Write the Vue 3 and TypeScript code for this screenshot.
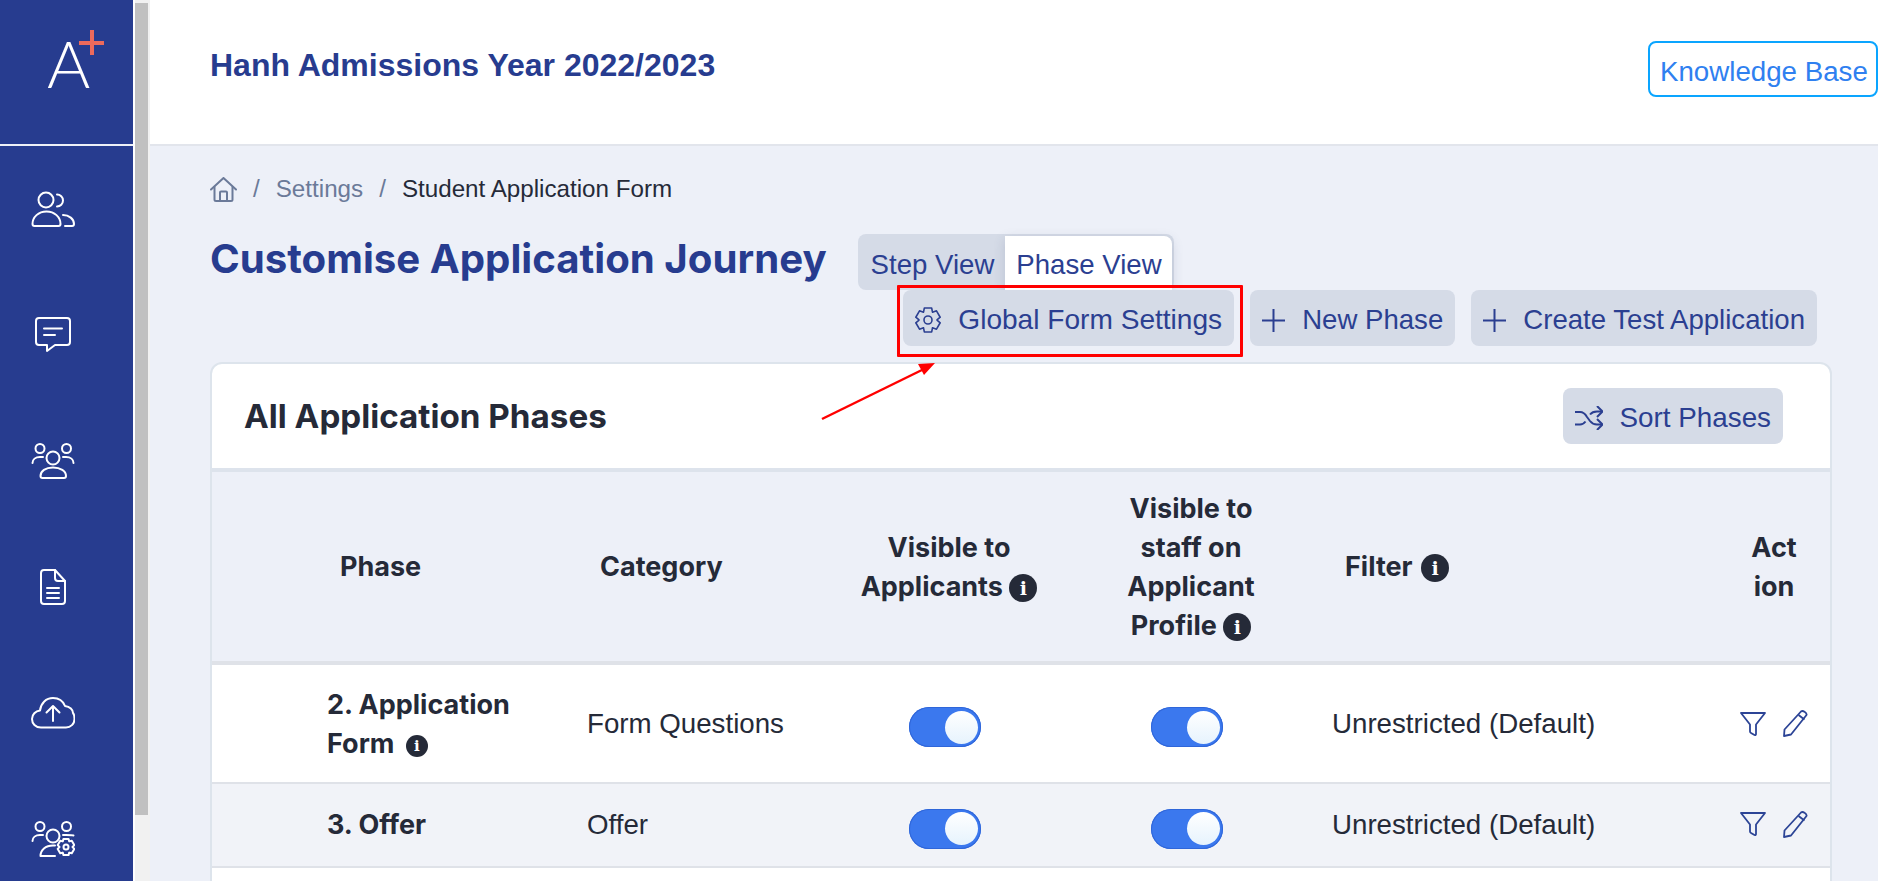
<script setup lang="ts">
interface Phase {
  name: string
  hasInfo: boolean
  category: string
  filter: string
}

const phases: Phase[] = [
  { name: '2. Application Form', hasInfo: true, category: 'Form Questions', filter: 'Unrestricted (Default)' },
  { name: '3. Offer', hasInfo: false, category: 'Offer', filter: 'Unrestricted (Default)' },
]

// six lobed cog, used by the settings button and the last nav icon
const cogPath = (cx: number, cy: number, outer: number, inner: number) => {
  const pts: string[] = []
  for (let i = 0; i < 6; i++) {
    const a = (Math.PI / 3) * i - Math.PI / 2
    const corners: [number, number][] = [
      [a - 0.52, inner],
      [a - 0.3, outer],
      [a + 0.3, outer],
      [a + 0.52, inner],
    ]
    corners.forEach(([ang, r]) => {
      pts.push(`${(cx + Math.cos(ang) * r).toFixed(2)} ${(cy + Math.sin(ang) * r).toFixed(2)}`)
    })
  }
  return `M${pts.join('L')}Z`
}
</script>

<template>
  <div class="app">
    <aside class="sidebar">
      <div class="logo">
        <span class="logo-a">A</span>
        <span class="logo-plus"></span>
      </div>
      <nav class="nav">
        <a class="nav-item">
          <svg width="44" height="36" viewBox="0 0 44 36" class="nav-icon">
            <circle cx="15" cy="9" r="7.5" />
            <path d="M26 3.5a6 6 0 1 1 0 12" />
            <path d="M1.500 33c0-7 6-12.500 14-12.500s14 5.500 14 12.500q0 2-2 2H3.500q-2 0-2-2z" />
            <path d="M32 24c6 0 11 4 11 9q0 2-2 2h-7" />
          </svg>
        </a>
        <a class="nav-item">
          <svg width="36" height="36" viewBox="0 0 36 36" class="nav-icon">
            <path d="M4 1h28a3 3 0 0 1 3 3v21a3 3 0 0 1-3 3H20l-8 6v-6H4a3 3 0 0 1-3-3V4a3 3 0 0 1 3-3z" />
            <path d="M9 11.500h18M9 18h11" />
          </svg>
        </a>
        <a class="nav-item">
          <svg width="44" height="36" viewBox="0 0 44 36" class="nav-icon">
            <circle cx="22" cy="15" r="6.500" />
            <circle cx="9" cy="5.500" r="4.500" />
            <circle cx="35.500" cy="5.500" r="4.500" />
            <path d="M1.500 20c0-3.500 3-6 7.500-6h3M42.500 20c0-3.500-3-6-7.500-6h-3" />
            <path d="M9.500 33c0-5 5-8.500 12.500-8.500S35 28 35 33q0 2-2 2H11.500q-2 0-2-2z" />
          </svg>
        </a>
        <a class="nav-item">
          <svg width="26" height="36" viewBox="0 0 26 36" class="nav-icon">
            <path d="M4 1h11l10 11v20a3 3 0 0 1-3 3H4a3 3 0 0 1-3-3V4a3 3 0 0 1 3-3z" />
            <path d="M15 1v8a3 3 0 0 0 3 3h7" />
            <path d="M7 19h12M7 24h12M7 29h12" />
          </svg>
        </a>
        <a class="nav-item">
          <svg width="44" height="32" viewBox="0 0 44 32" class="nav-icon">
            <path d="M10 30.500C4.500 30.500 1 26.500 1 22c0-4.500 3.500-8 8-8.500C10 6 15 1 22 1c6 0 10 3 12 8 5 .5 8 4 8 7 1.500 1.500 1.500 3 1.500 6 0 5-4 8.500-8.500 8.500z" />
            <path d="M22 24V9M15.500 15.500 22 9l6.500 6.500" />
          </svg>
        </a>
        <a class="nav-item">
          <svg width="44" height="36" viewBox="0 0 44 36" class="nav-icon">
            <circle cx="22" cy="15" r="6.500" />
            <circle cx="9" cy="5.500" r="4.500" />
            <circle cx="35.500" cy="5.500" r="4.500" />
            <path d="M1.500 20c0-3.500 3-6 7.500-6h3M42.500 14.500c-1-.4-3-.5-7.500-.5h-3" />
            <path d="M9.500 35c0-6 5-10.500 12.500-10.500h2M9.500 35H24" />
            <path :d="cogPath(35, 26, 8.500, 6.500)" />
            <circle cx="35" cy="26" r="2.500" />
          </svg>
        </a>
      </nav>
    </aside>
    <div class="scrollbar"><div class="scrollbar-thumb"></div></div>

    <main class="main">
      <header class="topbar">
        <h2 class="year-title">Hanh Admissions Year 2022/2023</h2>
        <button class="kb-button">Knowledge Base</button>
      </header>

      <section class="content">
        <div class="breadcrumb">
          <svg width="27" height="25" viewBox="0 0 27 25" class="home-icon">
            <path d="M1 12.500 13.500 1 26 12.500" />
            <path d="M4.500 10v12.500a1.500 1.500 0 0 0 1.500 1.500h15a1.500 1.500 0 0 0 1.500-1.500V10" />
            <path d="M10 24v-8.500a1 1 0 0 1 1-1h5a1 1 0 0 1 1 1V24" />
          </svg>
          <span class="crumb-sep">/</span>
          <span class="crumb">Settings</span>
          <span class="crumb-sep">/</span>
          <span class="crumb-current">Student Application Form</span>
        </div>

        <div class="title-row">
          <h1 class="page-title">Customise Application Journey</h1>
          <div class="tabs">
            <button class="tab">Step View</button>
            <button class="tab tab-active">Phase View</button>
          </div>
        </div>

        <div class="toolbar">
          <button class="btn btn-global">
            <svg width="26" height="28" viewBox="0 0 26 28" class="btn-icon btn-cog">
              <path :d="cogPath(13, 14, 12.500, 9)" />
              <circle cx="13" cy="14" r="4" />
            </svg>
            Global Form Settings
            <span class="callout"></span>
          </button>
          <button class="btn">
            <svg width="23" height="23" viewBox="0 0 23 23" class="btn-icon"><path d="M11.500 0v23M0 11.500h23" /></svg>
            New Phase
          </button>
          <button class="btn">
            <svg width="23" height="23" viewBox="0 0 23 23" class="btn-icon"><path d="M11.500 0v23M0 11.500h23" /></svg>
            Create Test Application
          </button>
        </div>

        <div class="card">
          <div class="card-head">
            <h3 class="card-title">All Application Phases</h3>
            <button class="btn btn-sort">
              <svg width="28" height="24" viewBox="0 0 28 24" class="btn-icon">
                <path d="M0 6h5c3 0 5 1.500 7 5l3 4c2 2.500 4 3.500 7 3.500h5" />
                <path d="M0 18.500h5c2.500 0 4-1 5.500-3M15 8.500C17 6 19 5.500 22 5.500h5" />
                <path d="M22 0l5.500 5.500L22 11M22 13l5.500 5.500L22 24" />
              </svg>
              Sort Phases
            </button>
          </div>

          <div class="grid grid-head">
            <div class="th th-phase">Phase</div>
            <div class="th th-category">Category</div>
            <div class="th th-center">Visible to Applicants <i class="info">i</i></div>
            <div class="th th-center th-staff">Visible to staff on Applicant Profile <i class="info">i</i></div>
            <div class="th th-filter">Filter <i class="info info-filter">i</i></div>
            <div class="th th-action"><span>Action</span></div>
          </div>

          <div v-for="(p, idx) in phases" :key="p.name" class="grid grid-row" :class="{ 'row-alt': idx % 2 === 1, 'row-tall': p.hasInfo }">
            <div class="td td-name">{{ p.name }} <i v-if="p.hasInfo" class="info info-sm">i</i></div>
            <div class="td td-category">{{ p.category }}</div>
            <div class="td td-toggle td-toggle-a"><span class="toggle"><span class="knob"></span></span></div>
            <div class="td td-toggle td-toggle-b"><span class="toggle"><span class="knob"></span></span></div>
            <div class="td td-filter">{{ p.filter }}</div>
            <div class="td td-actions">
              <svg width="26" height="24" viewBox="0 0 26 24" class="act-icon">
                <path d="M1 1h24L16 12.500V22q0 1.500-1.500 1L11 21q-1-.5-1-1.500v-7z" />
              </svg>
              <svg width="25" height="27" viewBox="0 0 25 27" class="act-icon">
                <path d="M18 1.500c1-.8 2-.8 3.500.2s2.500 2 2 3.300L8 24.500 1 26l.5-6.500z" />
                <path d="M15.500 5l6 4.500" />
              </svg>
            </div>
          </div>
          <div class="row-empty"></div>
        </div>
      </section>

      <svg class="arrow" width="130" height="70" viewBox="0 0 130 70">
        <path d="M2 62 106 11" />
        <path class="arrow-head" d="M115 6 98 7l6 11z" />
      </svg>
    </main>
  </div>
</template>

<style scoped>
.app {
  display: flex;
  width: 1878px;
  height: 881px;
  overflow: hidden;
  font-family: 'Liberation Sans', Arial, sans-serif;
  color: #252a38;
}

.sidebar {
  flex: 0 0 133px;
  min-width: 0;
  background: #273c8f;
}

.logo {
  position: relative;
  height: 144px;
  border-bottom: 2px solid #eef1f8;
}

.logo-a {
  position: absolute;
  left: 47px;
  top: 28px;
  font-family: Lato, sans-serif;
  font-weight: 300;
  font-size: 66px;
  line-height: 70px;
  color: #fff;
}

.logo-plus {
  position: absolute;
  left: 79px;
  top: 30px;
  width: 25px;
  height: 25px;
  background:
    linear-gradient(#ec6a5c, #ec6a5c) center / 25px 4px no-repeat,
    linear-gradient(#ec6a5c, #ec6a5c) center / 4px 25px no-repeat;
}

.nav {
  display: flex;
  flex-direction: column;
}

.nav-item {
  display: flex;
  align-items: center;
  justify-content: center;
  width: 106px;
  height: 126px;
}

.nav-icon {
  fill: none;
  stroke: #fff;
  stroke-width: 2;
  stroke-linecap: round;
  stroke-linejoin: round;
}

.scrollbar {
  flex: 0 0 17px;
  background: #f1f1f1;
  border-left: 2px solid #fff;
  box-sizing: border-box;
  padding-top: 3px;
}

.scrollbar-thumb {
  width: 13px;
  height: 812px;
  background: #c0c0c0;
}

.main {
  position: relative;
  flex: 1;
  min-width: 0;
  background: #edf0f8;
}

.topbar {
  display: flex;
  align-items: flex-start;
  justify-content: space-between;
  height: 144px;
  padding-left: 60px;
  background: #fff;
  border-bottom: 2px solid #e2e5ec;
}

.year-title {
  margin: 47px 0 0;
  font-size: 32px;
  line-height: 36px;
  font-weight: 700;
  color: #273c8f;
}

.kb-button {
  width: 230px;
  height: 56px;
  margin-top: 41px;
  padding: 6px 0 0 10px;
  text-align: left;
  background: #fff;
  border: 2px solid #0aa5ff;
  border-radius: 8px;
  font: 27.7px 'Liberation Sans', Arial, sans-serif;
  color: #2f80f0;
}

.content {
  padding: 0 46px 0 60px;
}

.breadcrumb {
  display: flex;
  align-items: center;
  height: 26px;
  margin-top: 30px;
  font-size: 24.2px;
}

.home-icon {
  fill: none;
  stroke: #6b7a99;
  stroke-width: 2;
  stroke-linejoin: round;
  stroke-linecap: round;
}

.crumb-sep {
  margin: 0 16px;
  color: #6b7a99;
}

.crumb {
  color: #6b7a99;
}

.crumb-current {
  color: #252a38;
}

.title-row {
  display: flex;
  align-items: center;
  gap: 31px;
  height: 56px;
  margin-top: 32px;
}

.page-title {
  margin: -6px 0 0;
  font-family: Inter, sans-serif;
  font-size: 40.2px;
  font-weight: 700;
  line-height: 50px;
  color: #273c8f;
}

.tabs {
  display: flex;
  height: 56px;
  background: #d5dbe7;
  border-radius: 8px;
  box-sizing: border-box;
}

.tab {
  padding: 5px 11px 0 13px;
  background: none;
  border: 0;
  font: 27.6px 'Liberation Sans', Arial, sans-serif;
  color: #2b3f91;
}

.tab-active {
  margin: 2px 2px 0 0;
  padding: 3px 10px 0 11px;
  background: #fff;
  border-radius: 0 8px 0 0;
  box-shadow: 0 3px 12px rgba(60, 70, 110, 0.18);
}

.toolbar {
  display: flex;
  justify-content: flex-end;
  gap: 16px;
  padding-right: 15px;
}

.btn {
  display: flex;
  align-items: center;
  gap: 17px;
  height: 56px;
  padding: 4px 12px 0;
  background: #d5dbe7;
  border: 0;
  border-radius: 8px;
  font: 27.6px 'Liberation Sans', Arial, sans-serif;
  color: #2b3f91;
}

.btn-global {
  position: relative;
  z-index: 1;
  font-size: 28.1px;
}

.btn-sort {
  font-size: 27.8px;
}

.btn-icon {
  flex: none;
  fill: none;
  stroke: #2b3f91;
  stroke-width: 2;
  stroke-linejoin: round;
}

.btn-cog {
  stroke-width: 1.6;
}

.callout {
  position: absolute;
  inset: -5px -9px -11px -6px;
  border: 3px solid #ff0000;
  border-radius: 1px;
}

.card {
  margin-top: 16px;
  background: #fff;
  border: 2px solid #dde4ec;
  border-radius: 12px 12px 0 0;
}

.card-head {
  display: flex;
  align-items: center;
  justify-content: space-between;
  height: 104px;
  padding: 0 47px 0 32px;
  border-bottom: 4px solid #dde3ec;
}

.card-title {
  margin: 0;
  font-family: Inter, sans-serif;
  font-size: 33.2px;
  font-weight: 700;
  color: #252a38;
}

.grid {
  display: grid;
  grid-template-columns: 363px 270px 208px 276px 371px 130px;
}

.grid-head {
  height: 189px;
  align-items: center;
  background: #edf0f8;
  border-bottom: 4px solid #dfe2e8;
}

.th {
  font-family: Inter, sans-serif;
  font-size: 27px;
  font-weight: 700;
  line-height: 39px;
}

.th-phase {
  padding-left: 128px;
}

.th-category {
  padding-left: 25px;
}

.th-center {
  padding: 0 10px;
  text-align: center;
}

.th-staff {
  padding: 0 64px;
}

.th-filter {
  padding-left: 16px;
}

.th-action span {
  display: block;
  width: 50px;
  margin-left: 49px;
  text-align: center;
  word-break: break-all;
}

.info {
  display: inline-block;
  width: 28px;
  height: 28px;
  border-radius: 50%;
  background: #252a38;
  color: #fff;
  font: 700 19px/28px 'DejaVu Serif', serif;
  text-align: center;
  vertical-align: 1px;
}

.info-filter {
  margin-left: 2px;
}

.info-sm {
  width: 22px;
  height: 22px;
  margin-left: 5px;
  font-size: 15px;
  line-height: 22px;
  vertical-align: 2px;
}

.grid-row {
  height: 82px;
  align-items: center;
  border-bottom: 2px solid #dfe2e8;
}

.row-tall {
  height: 117px;
}

.row-alt {
  background: #f1f3f8;
}

.row-alt .td:not(.td-toggle) {
  margin-top: -2px;
}

.td {
  font-size: 27.7px;
  line-height: 39px;
}

.td-name {
  padding-left: 115px;
  padding-right: 40px;
  font-family: Inter, sans-serif;
  font-size: 27px;
  font-weight: 700;
}

.td-category {
  padding-left: 12px;
}

.td-toggle {
  display: flex;
  padding-top: 7px;
}

.td-toggle-a {
  padding-left: 64px;
}

.td-toggle-b {
  padding-left: 98px;
}

.toggle {
  display: flex;
  align-items: center;
  justify-content: flex-end;
  width: 72px;
  height: 40px;
  padding-right: 3px;
  box-sizing: border-box;
  background: #3b78ee;
  border-radius: 20px;
  box-shadow: inset 0 0 0 1px #2f66d9;
}

.knob {
  width: 33px;
  height: 33px;
  border-radius: 50%;
  background: linear-gradient(#fff, #e6f3fd);
}

.td-filter {
  padding-left: 3px;
}

.td-actions {
  display: flex;
  align-items: center;
  gap: 17px;
  padding-left: 40px;
}

.act-icon {
  fill: none;
  stroke: #2c4496;
  stroke-width: 1.8;
  stroke-linejoin: round;
}

.row-empty {
  height: 60px;
}

.arrow {
  position: absolute;
  left: 670px;
  top: 357px;
  z-index: 2;
}

.arrow path {
  fill: none;
  stroke: #ff0000;
  stroke-width: 2.500;
}

.arrow .arrow-head {
  fill: #ff0000;
  stroke: none;
}
</style>

<style>
html,
body {
  margin: 0;
  overflow: hidden;
}
</style>
